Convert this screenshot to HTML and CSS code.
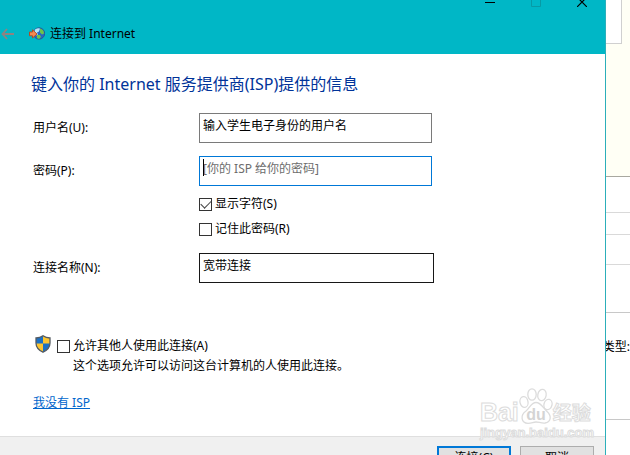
FILE: index.html
```html
<!DOCTYPE html>
<html lang="zh-CN">
<head>
  <meta charset="UTF-8">
  <meta name="viewport" content="width=device-width, initial-scale=1.0">
  <title>连接到 Internet</title>
  <link rel="stylesheet" href="styles.css">
</head>
<body>
  <div class="desktop">
    <main class="dialog">
      <header class="titlebar">
        <div class="window-controls">
          <button type="button" aria-label="最小化"><svg width="10" height="10" viewBox="0 0 10 10"><path d="M0 5.500h10" stroke="#000"/></svg></button>
          <button type="button" aria-label="最大化" disabled><svg width="10" height="10" viewBox="0 0 10 10"><path d="M.5.500h9v9h-9z" fill="none" stroke="#079aa5"/></svg></button>
          <button type="button" aria-label="关闭"><svg width="10" height="10" viewBox="0 0 10 10"><path d="M0 0l10 10M10 0L0 10" stroke="#000" stroke-width="1.200"/></svg></button>
        </div>
        <div class="caption">
          <button type="button" class="back" aria-label="返回"><svg width="13" height="12" viewBox="0 0 13 12"><path d="M6 1L1.500 6L6 11M2 6h11" fill="none" stroke="#8f8281" stroke-width="1.800"/></svg></button>
          <svg class="globe" width="16" height="14" viewBox="0 0 16 14">
            <circle cx="10" cy="6.500" r="5.700" fill="#2468c4" stroke="#2c4f8e" stroke-width=".8"/>
            <path d="M6 2.500q3-2 5-1l-1 3-2 1 1 2-2 1-2-2z" fill="#b9e4f5"/>
            <path d="M11 1.500q4 1 4 5l-2 1-2-2zM8 8l3 0 1 2-2 2-2-1z" fill="#6fc34a"/>
            <path d="M.5 5h3V2.800L8 7l-4.500 4V8.800h-3z" fill="#f58a52" stroke="#b7441b" stroke-width=".9"/>
          </svg>
          <span>连接到 Internet</span>
        </div>
      </header>

      <form class="wizard">
        <div class="content">
          <h1>键入你的 Internet 服务提供商(ISP)提供的信息</h1>
          <div class="fields">
            <label for="user-name">用户名(U):</label>
            <input type="text" id="user-name" value="输入学生电子身份的用户名">

            <label for="password">密码(P):</label>
            <div class="password">
              <input type="text" id="password" class="active" placeholder="[你的 ISP 给你的密码]">
              <span class="caret"></span>
            </div>

            <div class="options">
              <label><input type="checkbox" checked>显示字符(S)</label>
              <label><input type="checkbox">记住此密码(R)</label>
            </div>

            <label for="connection-name">连接名称(N):</label>
            <input type="text" id="connection-name" class="hover" value="宽带连接">
          </div>

          <div class="sharing">
            <svg width="16" height="18" viewBox="0 0 16 18">
              <path d="M8 .8Q5 3 1 3V8q0 6 7 9.200Q15 14 15 8V3Q11 3 8 .8z" fill="#1b70c4"/>
              <path d="M8 .8Q11 3 15 3V8.500H8zM8 8.500V17.200Q2 14.500 1.100 8.500z" fill="#fcc530"/>
              <path d="M8 .8Q5 3 1 3V8q0 6 7 9.200Q15 14 15 8V3Q11 3 8 .8z" fill="none" stroke="#555b62" stroke-width="1.300"/>
            </svg>
            <div>
              <label><input type="checkbox" aria-describedby="share-note">允许其他人使用此连接(A)</label>
              <p id="share-note">这个选项允许可以访问这台计算机的人使用此连接。</p>
            </div>
          </div>
          <a href="#">我没有 ISP</a>
        </div>

        <footer class="actions">
          <button type="submit" class="primary">连接(C)</button>
          <button type="button">取消</button>
        </footer>
      </form>

      <div class="watermark">
        <div class="brand">
          <span>Bai</span>
          <svg width="34" height="36" viewBox="0 0 34 36">
            <g fill="#fff" stroke="#dcdcdc" stroke-width="1.300">
              <ellipse cx="5" cy="14" rx="4" ry="5.500" transform="rotate(-10 5 14)"/>
              <ellipse cx="13" cy="6.500" rx="4.200" ry="5.700"/>
              <ellipse cx="23" cy="7" rx="4.200" ry="5.700" transform="rotate(10 23 7)"/>
              <ellipse cx="29" cy="16.500" rx="4" ry="5.200" transform="rotate(15 29 16.500)"/>
              <path d="M17 14.500C12 14.500 11 20 7 23C1 27 2 35 9 35.300C13 35.300 14 34 17 34S22 35.300 26 35C32 34 33 28 28 23.500C24 20 22 14.500 17 14.500z"/>
            </g>
            <text x="17" y="32" text-anchor="middle" class="du">du</text>
          </svg>
          <span class="brand-cn">经验</span>
        </div>
        <div class="site">jingyan.baidu.com</div>
      </div>
    </main>

    <aside class="behind">
      <div class="notice"><div class="panel"></div></div>
      <div class="line first"></div>
      <div class="line second"></div>
      <div class="line third"></div>
      <div class="line fourth"></div>
      <div class="line type"><span>类型:</span></div>
    </aside>
  </div>
</body>
</html>
```
FILE: styles.css
```css
* {
  box-sizing: border-box;
}
body {
  margin: 0;
  background: #fff;
  color: #000;
  font: 12px/18px "Noto Sans", "Noto Sans CJK SC", sans-serif;
  overflow: hidden;
}
button, input {
  font: inherit;
  color: inherit;
}
.desktop {
  display: flex;
  height: 100vh;
  overflow: hidden;
}
.dialog {
  position: relative;
  flex: 1;
  border-right: 1px solid #2cafba;
}

/* Title bar */
.titlebar {
  background: #00b7c6;
}
.window-controls {
  display: flex;
  justify-content: flex-end;
  gap: 36px;
  height: 24px;
  padding-right: 18px;
}
.window-controls button, .back {
  display: flex;
  padding: 0;
  border: none;
  background: none;
}
.window-controls button {
  height: 10px;
  margin-top: -3px;
}
.caption {
  display: flex;
  align-items: center;
  height: 30px;
  padding: 0 0 10px 1px;
}
.globe {
  margin: 0 5px 0 15px;
}

/* Form */
.content {
  padding: 18px 31px 24px;
}
h1 {
  margin: 0 0 17px;
  font-size: 16px;
  line-height: 24px;
  font-weight: normal;
  color: #003399;
}
.fields {
  display: grid;
  grid-template-columns: 166px 1fr;
  align-items: center;
  row-gap: 13px;
  padding-left: 2px;
}
input[type="text"] {
  display: block;
  width: 233px;
  height: 30px;
  padding: 0 3px 6px;
  border: 1px solid #7a7a7a;
  border-radius: 0;
  background: #fff;
  outline: none;
}
input.active {
  border-color: #0078d7;
}
input.hover {
  width: 235px;
  border-color: #171717;
}
input::placeholder {
  color: #6d6d6d;
  opacity: 1;
}
.password {
  position: relative;
}
.caret {
  position: absolute;
  left: 4px;
  top: 3px;
  width: 1px;
  height: 17px;
  background: #000;
}
.options {
  grid-column: 2;
  display: grid;
  gap: 7px;
  margin: -4px 0 2px;
}
.options label, .sharing label {
  display: flex;
  align-items: center;
  gap: 3px;
}
input[type="checkbox"] {
  appearance: none;
  display: grid;
  place-items: center;
  width: 13px;
  height: 13px;
  margin: 0;
  border: 1px solid #333;
  background: #fff;
}
input[type="checkbox"]:checked::before {
  content: "";
  width: 9px;
  height: 5px;
  margin-bottom: 3px;
  border: solid #444;
  border-width: 0 0 1px 1px;
  transform: rotate(-45deg);
}
.sharing {
  display: flex;
  align-items: flex-start;
  gap: 6px;
  margin-top: 52px;
  padding-left: 4px;
}
.sharing label {
  padding-top: 2px;
}
.sharing p {
  margin: 2px 0 0 16px;
}
a {
  display: inline-block;
  margin: 19px 0 0 2px;
  color: #0066cc;
}
.actions {
  display: flex;
  justify-content: flex-end;
  gap: 9px;
  padding: 9px 11px;
  border-top: 1px solid #dfdfdf;
  background: #f0f0f0;
}
.actions button {
  width: 74px;
  height: 23px;
  padding: 0;
  border: 1px solid #adadad;
  background: #e1e1e1;
}
.actions .primary {
  border: 2px solid #0078d7;
}

/* Watermark over the lower right corner */
.watermark {
  position: absolute;
  right: 11px;
  top: 386px;
  color: #fff;
  font-family: "Liberation Sans", "Noto Sans CJK SC", sans-serif;
  font-weight: bold;
  -webkit-text-stroke: 1px #dcdcdc;
  pointer-events: none;
}
.brand {
  display: flex;
  align-items: flex-end;
  height: 38px;
  font-size: 25px;
  line-height: 24px;
}
.brand-cn {
  font-size: 19px;
  line-height: 20px;
}
.du {
  fill: #d4d4d4;
  font-size: 16px;
  -webkit-text-stroke: 0;
}
.site {
  font-size: 13px;
  line-height: 18px;
}

/* Page behind the dialog */
.behind {
  width: 24px;
  overflow: hidden;
}
.notice {
  height: 177px;
  border-bottom: 1px solid #a8a8a0;
  background: #fffff5;
}
.panel {
  width: 16px;
  height: 44px;
  border: solid #d0d0d0;
  border-width: 0 1px 1px 0;
  background: #fff;
}
.line {
  border-bottom: 1px solid #d9d9d9;
}
.first {
  height: 36px;
}
.second {
  height: 22px;
}
.third {
  height: 30px;
}
.fourth {
  height: 48px;
  border-color: #c8c8c8;
}
.type {
  display: flex;
  justify-content: flex-end;
  height: 107px;
  padding-top: 25px;
  border-color: #c8c8c8;
  white-space: nowrap;
}
```
